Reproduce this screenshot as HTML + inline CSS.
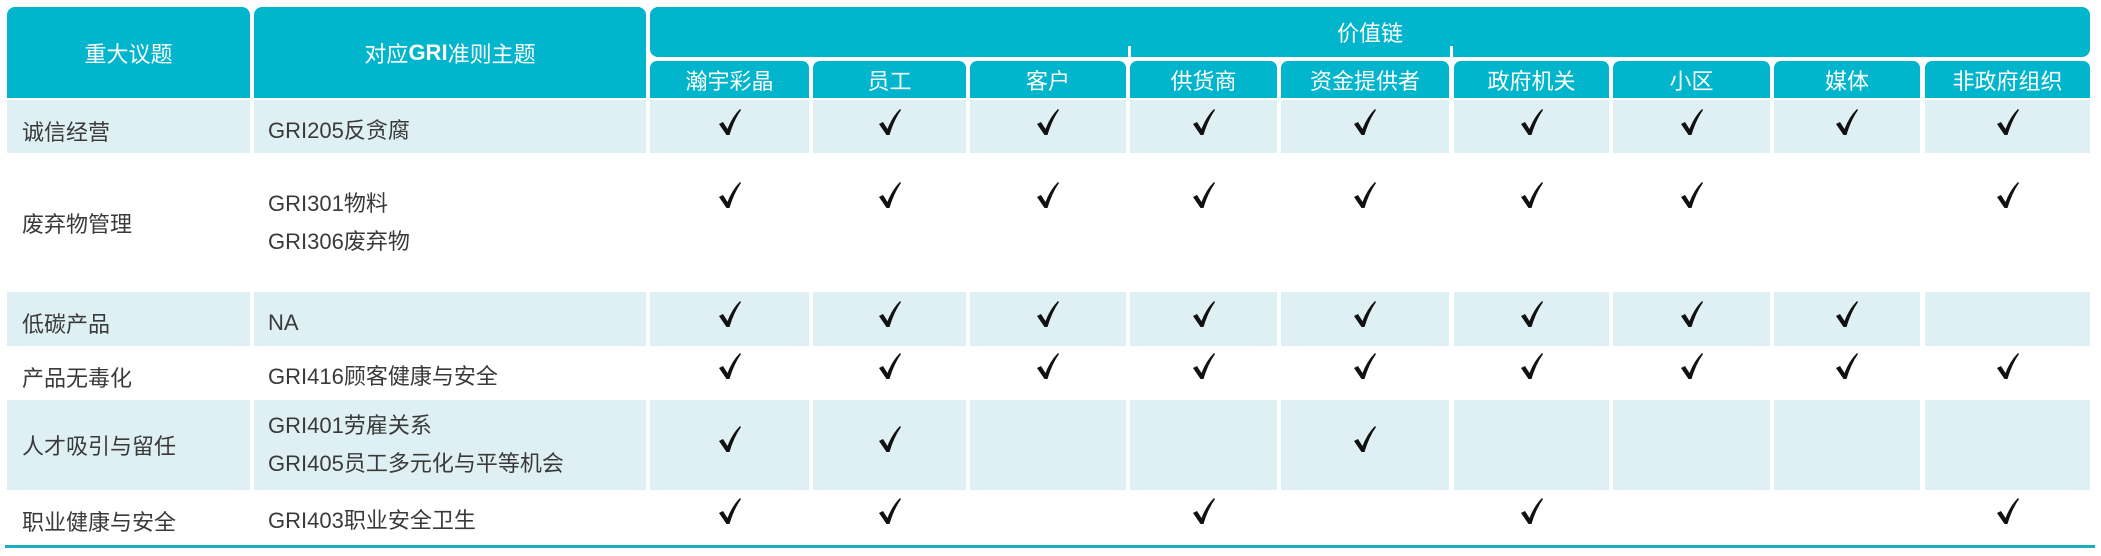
<!DOCTYPE html>
<html><head><meta charset="utf-8"><style>
*{margin:0;padding:0;box-sizing:border-box}
body{width:2101px;height:556px;background:#fff;position:relative;overflow:hidden;font-family:"Liberation Sans","Noto Sans CJK SC",sans-serif;color:#3a3a3a}
.h{position:absolute;background:#00b5cc;color:#fff;display:flex;align-items:center;justify-content:center;font-size:22px}
.r{position:absolute;left:0;width:2101px}
.r div{position:absolute;top:0;height:100%}
.s div{background:#dff0f4}
.c1{left:7px;width:243px;font-size:22px;padding-left:15px;display:flex;align-items:center}
.c2{left:254px;width:392px;font-size:22px;padding-left:14px;display:flex;flex-direction:column;justify-content:center;line-height:38px}
.a{left:650px;width:159px}.b{left:813px;width:153px}.c{left:970px;width:156px}.d{left:1130px;width:147px}.e{left:1281px;width:168px}.f{left:1454px;width:155px}.g{left:1613px;width:157px}.hh{left:1774px;width:146px}.i{left:1925px;width:165px}
.k svg{position:absolute;left:50%;margin-left:-11px}
</style></head><body>
<div class="h" style="left:7px;top:7px;width:243px;height:91px;border-radius:8px 8px 0 0">重大议题</div>
<div class="h" style="left:254px;top:7px;width:392px;height:91px;border-radius:8px 8px 0 0">对应<b>GRI</b>准则主题</div>
<div class="h" style="left:650px;top:7px;width:1440px;height:50px;border-radius:8px">价值链</div>
<div style="position:absolute;left:1128px;top:46px;width:3px;height:15px;background:#fff"></div>
<div style="position:absolute;left:1450px;top:46px;width:3px;height:15px;background:#fff"></div>
<div class="h a" style="top:61px;height:37px;border-radius:7px 7px 0 0">瀚宇彩晶</div>
<div class="h b" style="top:61px;height:37px;border-radius:7px 7px 0 0">员工</div>
<div class="h c" style="top:61px;height:37px;border-radius:7px 7px 0 0">客户</div>
<div class="h d" style="top:61px;height:37px;border-radius:7px 7px 0 0">供货商</div>
<div class="h e" style="top:61px;height:37px;border-radius:7px 7px 0 0">资金提供者</div>
<div class="h f" style="top:61px;height:37px;border-radius:7px 7px 0 0">政府机关</div>
<div class="h g" style="top:61px;height:37px;border-radius:7px 7px 0 0">小区</div>
<div class="h hh" style="top:61px;height:37px;border-radius:7px 7px 0 0">媒体</div>
<div class="h i" style="top:61px;height:37px;border-radius:7px 7px 0 0">非政府组织</div>

<svg width="0" height="0" style="position:absolute"><defs><symbol id="ck" viewBox="0 0 22 27"><path d="M0 15 L4 13 L8.5 20 Q13 8 21 0 L22 1 Q15 11 10.5 26 L7.5 26 Z" fill="#111"/></symbol></defs></svg>

<div class="r s" style="top:100px;height:53px">
<div class="c1" style="padding-top:8px">诚信经营</div><div class="c2" style="padding-top:8px">GRI205反贪腐</div>
<div class="a k"><svg width="22" height="27" style="top:9px"><use href="#ck"/></svg></div><div class="b k"><svg width="22" height="27" style="top:9px"><use href="#ck"/></svg></div><div class="c k"><svg width="22" height="27" style="top:9px"><use href="#ck"/></svg></div><div class="d k"><svg width="22" height="27" style="top:9px"><use href="#ck"/></svg></div><div class="e k"><svg width="22" height="27" style="top:9px"><use href="#ck"/></svg></div><div class="f k"><svg width="22" height="27" style="top:9px"><use href="#ck"/></svg></div><div class="g k"><svg width="22" height="27" style="top:9px"><use href="#ck"/></svg></div><div class="hh k"><svg width="22" height="27" style="top:9px"><use href="#ck"/></svg></div><div class="i k"><svg width="22" height="27" style="top:9px"><use href="#ck"/></svg></div>
</div>
<div class="r" style="top:154px;height:137px">
<div class="c1">废弃物管理</div><div class="c2"><span>GRI301物料</span><span>GRI306废弃物</span></div>
<div class="a k"><svg width="22" height="27" style="top:28px"><use href="#ck"/></svg></div><div class="b k"><svg width="22" height="27" style="top:28px"><use href="#ck"/></svg></div><div class="c k"><svg width="22" height="27" style="top:28px"><use href="#ck"/></svg></div><div class="d k"><svg width="22" height="27" style="top:28px"><use href="#ck"/></svg></div><div class="e k"><svg width="22" height="27" style="top:28px"><use href="#ck"/></svg></div><div class="f k"><svg width="22" height="27" style="top:28px"><use href="#ck"/></svg></div><div class="g k"><svg width="22" height="27" style="top:28px"><use href="#ck"/></svg></div><div class="i k"><svg width="22" height="27" style="top:28px"><use href="#ck"/></svg></div>
</div>
<div class="r s" style="top:292px;height:54px">
<div class="c1" style="padding-top:8px">低碳产品</div><div class="c2" style="padding-top:8px">NA</div>
<div class="a k"><svg width="22" height="27" style="top:9px"><use href="#ck"/></svg></div><div class="b k"><svg width="22" height="27" style="top:9px"><use href="#ck"/></svg></div><div class="c k"><svg width="22" height="27" style="top:9px"><use href="#ck"/></svg></div><div class="d k"><svg width="22" height="27" style="top:9px"><use href="#ck"/></svg></div><div class="e k"><svg width="22" height="27" style="top:9px"><use href="#ck"/></svg></div><div class="f k"><svg width="22" height="27" style="top:9px"><use href="#ck"/></svg></div><div class="g k"><svg width="22" height="27" style="top:9px"><use href="#ck"/></svg></div><div class="hh k"><svg width="22" height="27" style="top:9px"><use href="#ck"/></svg></div><div class="i"></div>
</div>
<div class="r" style="top:346px;height:53px">
<div class="c1" style="padding-top:8px">产品无毒化</div><div class="c2" style="padding-top:8px">GRI416顾客健康与安全</div>
<div class="a k"><svg width="22" height="27" style="top:7px"><use href="#ck"/></svg></div><div class="b k"><svg width="22" height="27" style="top:7px"><use href="#ck"/></svg></div><div class="c k"><svg width="22" height="27" style="top:7px"><use href="#ck"/></svg></div><div class="d k"><svg width="22" height="27" style="top:7px"><use href="#ck"/></svg></div><div class="e k"><svg width="22" height="27" style="top:7px"><use href="#ck"/></svg></div><div class="f k"><svg width="22" height="27" style="top:7px"><use href="#ck"/></svg></div><div class="g k"><svg width="22" height="27" style="top:7px"><use href="#ck"/></svg></div><div class="hh k"><svg width="22" height="27" style="top:7px"><use href="#ck"/></svg></div><div class="i k"><svg width="22" height="27" style="top:7px"><use href="#ck"/></svg></div>
</div>
<div class="r s" style="top:400px;height:90px">
<div class="c1">人才吸引与留任</div><div class="c2"><span>GRI401劳雇关系</span><span>GRI405员工多元化与平等机会</span></div>
<div class="a k"><svg width="22" height="27" style="top:26px"><use href="#ck"/></svg></div><div class="b k"><svg width="22" height="27" style="top:26px"><use href="#ck"/></svg></div><div class="c"></div><div class="d"></div><div class="e k"><svg width="22" height="27" style="top:26px"><use href="#ck"/></svg></div><div class="f"></div><div class="g"></div><div class="hh"></div><div class="i"></div>
</div>
<div class="r" style="top:490px;height:55px">
<div class="c1" style="padding-top:6px">职业健康与安全</div><div class="c2" style="padding-top:6px">GRI403职业安全卫生</div>
<div class="a k"><svg width="22" height="27" style="top:8px"><use href="#ck"/></svg></div><div class="b k"><svg width="22" height="27" style="top:8px"><use href="#ck"/></svg></div><div class="d k"><svg width="22" height="27" style="top:8px"><use href="#ck"/></svg></div><div class="f k"><svg width="22" height="27" style="top:8px"><use href="#ck"/></svg></div><div class="i k"><svg width="22" height="27" style="top:8px"><use href="#ck"/></svg></div>
</div>
<div style="position:absolute;left:5px;top:545px;width:2090px;height:3px;background:#1aaebf"></div>
</body></html>
